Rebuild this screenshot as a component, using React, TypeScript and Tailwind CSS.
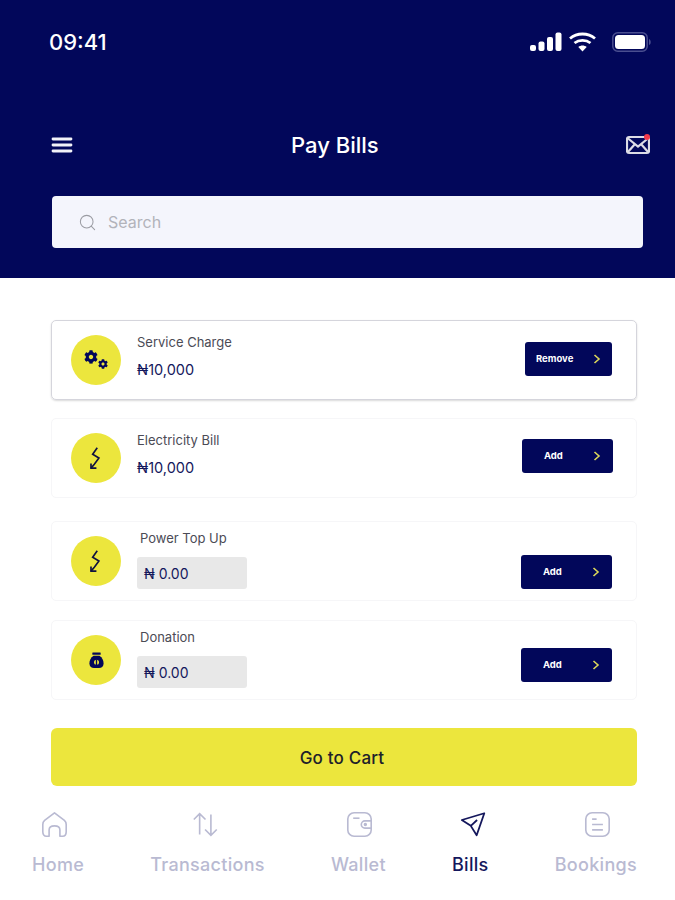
import type { ReactNode } from 'react';
import { Search } from 'lucide-react';
import { FaCog } from 'react-icons/fa';

const font = { fontFamily: 'Inter, "Noto Sans", sans-serif' };

function Gears() {
  return (
    <div className="flex items-start">
      <FaCog size={14} color="#02075a" className="mb-[6px]" />
      <FaCog size={10} color="#02075a" className="mt-[9px]" />
    </div>
  );
}

function Zap() {
  return (
    <svg width="20" height="25" viewBox="0 0 24 30" fill="none" stroke="#10123f" strokeWidth="2">
      <path d="M13.5 2 L8 10 L15.500 14.500 L10 22 L6 26.500" />
      <path d="M6 21 V26.500 H12.500" />
    </svg>
  );
}

function Bag() {
  return (
    <svg width="15" height="17" viewBox="0 0 18 20" fill="#02075a">
      <rect x="4" y="0.500" width="10" height="2.600" rx="0.600" />
      <path d="M5.500 4.200h7C16 6.500 17.500 10 17.500 13.500c0 3.600-2.600 5.500-5.500 5.500H6c-2.900 0-5.500-1.900-5.500-5.500C.5 10 2 6.500 5.500 4.200Z" />
      <circle cx="9" cy="12" r="3" fill="#ece63d" />
      <rect x="8.200" y="8.500" width="1.600" height="7" fill="#02075a" />
    </svg>
  );
}

function AddButton({ label, className }: { label: string; className: string }) {
  return (
    <div className={`flex h-[34px] items-center justify-between rounded-[3px] bg-[#02075a] text-[9.5px] font-bold text-white ${className}`}>
      <span>{label}</span>
      <svg width="8" height="10" viewBox="0 0 8 10" fill="none" stroke="#dcd75a" strokeWidth="1.600">
        <path d="M1.500 1 L6 5 L1.500 9" />
      </svg>
    </div>
  );
}

function Row({ card, icon, children, button }: { card: string; icon: ReactNode; children: ReactNode; button: ReactNode }) {
  return (
    <div className={`ml-[51px] flex h-[80px] w-[586px] items-center rounded-[5px] ${card}`}>
      <div className="ml-[19px] flex h-[50px] w-[50px] shrink-0 items-center justify-center rounded-full bg-[#ece63d]">{icon}</div>
      <div className="min-w-0 flex-1">{children}</div>
      {button}
    </div>
  );
}

function BillText({ label, amount }: { label: string; amount: string }) {
  return (
    <div className="mb-[9px] ml-[16px] flex flex-col">
      <span className="text-[13px] leading-[16px] text-[#4b4b55]">{label}</span>
      <span className="mt-[12px] text-[14.500px] leading-[16px] text-[#14175c]">{amount}</span>
    </div>
  );
}

function AmountInput({ label }: { label: string }) {
  return (
    <div className="mb-[3px] ml-[16px] flex flex-col">
      <span className="ml-[3px] text-[13px] leading-[16px] text-[#4b4b55]">{label}</span>
      <div className="mt-[11px] flex h-[32px] w-[110px] items-center rounded-[3px] bg-[#e8e8e8] pl-[7px] text-[14px] text-[#14175c]">₦ 0.00</div>
    </div>
  );
}

const navStroke = '#b9bad2';

const navItems: { label: string; active?: boolean; iconClass: string; icon: ReactNode }[] = [
  {
    label: 'Home',
    iconClass: 'mr-[7px]',
    icon: (
      <svg width="27" height="27" viewBox="0 0 30 30" fill="none" stroke={navStroke} strokeWidth="1.800" strokeLinejoin="round">
        <path d="M15 2 L26 10.500 C27.500 11.800 28 13 28 15 V23 C28 26 26.500 28 24 28 H21 V21 C21 18 19 16.500 15 16.500 C11 16.500 9 18 9 21 V28 H6 C3.500 28 2 26 2 23 V15 C2 13 2.500 11.800 4 10.500 Z" />
      </svg>
    ),
  },
  {
    label: 'Transactions',
    iconClass: 'mr-[5px]',
    icon: (
      <svg width="27" height="27" viewBox="0 0 30 30" fill="none" stroke={navStroke} strokeWidth="1.800">
        <path d="M8.500 26 V3 M2 9.500 L8.500 3 L15 9.500" />
        <path d="M21 4 V27 M14.500 20.500 L21 27 L27.500 20.500" />
      </svg>
    ),
  },
  {
    label: 'Wallet',
    iconClass: 'ml-[2px]',
    icon: (
      <svg width="27" height="27" viewBox="0 0 30 30" fill="none" stroke={navStroke} strokeWidth="1.800">
        <rect x="2" y="2" width="26" height="26" rx="7" />
        <path d="M8 8 H15" />
        <path d="M28 11 H21 A4 4 0 0 0 21 19 H28" />
        <circle cx="21.500" cy="15" r="1" />
      </svg>
    ),
  },
  {
    label: 'Bills',
    active: true,
    iconClass: 'ml-[6px]',
    icon: (
      <svg width="27" height="27" viewBox="0 0 30 30" fill="none" stroke="#14175c" strokeWidth="2" strokeLinejoin="round">
        <path d="M27 2.500 L2 10 L12 16.500 L18.500 27 Z" />
        <path d="M12 16.500 L19 10" />
      </svg>
    ),
  },
  {
    label: 'Bookings',
    iconClass: 'ml-[3px]',
    icon: (
      <svg width="27" height="27" viewBox="0 0 30 30" fill="none" stroke={navStroke} strokeWidth="1.800">
        <rect x="2" y="2" width="26" height="26" rx="7" />
        <path d="M9 9 H14 M9 15 H21 M9 21 H21" />
      </svg>
    ),
  },
];

export default function App() {
  return (
    <div className="flex h-[900px] w-[675px] flex-col overflow-hidden bg-white" style={font}>
      {/* Header */}
      <div className="h-[278px] shrink-0 bg-[#02075a] pt-[28px]">
        <div className="flex h-[28px] items-center pl-[49px] pr-[23px]">
          <span className="text-[22px] font-medium text-white">09:41</span>
          <svg className="ml-auto" width="32" height="20" viewBox="0 0 32 20" fill="white">
            <rect x="0" y="13" width="6" height="6" rx="2" />
            <rect x="8.500" y="9.500" width="6" height="9.500" rx="2" />
            <rect x="17" y="5" width="6" height="14" rx="2" />
            <rect x="25.500" y="0.500" width="6" height="18.500" rx="2" />
          </svg>
          <svg className="ml-[6px]" width="29" height="20" viewBox="0 0 28 20" fill="none" stroke="white" strokeWidth="2.800">
            <path d="M1.500 6.500 C8.500 0.500 19.500 0.500 26.500 6.500" />
            <path d="M6 11 C10.500 7.500 17.500 7.500 22 11" />
            <path d="M14 19.500 L9.800 15 C12 13 16 13 18.200 15 Z" fill="white" stroke="none" />
          </svg>
          <svg className="ml-[15px]" width="40" height="20" viewBox="0 0 40 20" fill="none">
            <rect x="0.800" y="0.800" width="34.400" height="18.400" rx="5" stroke="#4a4e8f" strokeWidth="1.500" />
            <rect x="3" y="3" width="30" height="14" rx="3.500" fill="white" />
            <path d="M37 7 C39 7.500 39.500 12.500 37 13 Z" fill="#4a4e8f" />
          </svg>
        </div>

        <div className="mt-[69px] flex h-[40px] items-center pl-[51px] pr-[25px]">
          <svg width="22" height="18" viewBox="0 0 22 18" stroke="#f2f2f8" strokeWidth="2.800" strokeLinecap="round">
            <path d="M2 3 H20 M2 9 H20 M2 15 H20" />
          </svg>
          <span className="ml-[218px] text-[22px] font-medium text-white">Pay Bills</span>
          <div className="relative ml-auto">
            <svg width="24" height="20" viewBox="0 0 24 20" fill="none" stroke="#dcdce6" strokeWidth="2.200">
              <rect x="1" y="2" width="22" height="16" rx="2" />
              <path d="M1.500 3 L12 11.500 L22.500 3 M1.500 17.500 L9 9 M22.500 17.500 L15 9" />
            </svg>
            <span className="absolute right-0 top-[-1px] h-[6px] w-[6px] rounded-full bg-[#f0384a]" />
          </div>
        </div>

        <div className="ml-[52px] mt-[31px] flex h-[52px] w-[591px] items-center rounded-[4px] bg-[#f4f5fc] pl-[26px]">
          <Search size={19} strokeWidth={1.300} className="text-[#9b9ca3]" />
          <span className="ml-[11px] text-[16px] text-[#b2b3ba]">Search</span>
        </div>
      </div>

      {/* Bills */}
      <div className="mt-[42px] flex flex-col">
        <Row
          card="border border-[#d5d5dc] shadow-[0_1px_2px_rgba(0,0,0,0.15)]"
          icon={<Gears />}
          button={<AddButton label="Remove" className="mb-[2px] mr-[24px] w-[87px] pl-[11px] pr-[11px]" />}
        >
          <BillText label="Service Charge" amount="₦10,000" />
        </Row>
        <div className="mt-[18px]">
          <Row
            card="border border-[#f6f6f8]"
            icon={<Zap />}
            button={<AddButton label="Add" className="mb-[4px] mr-[23px] w-[91px] pl-[22px] pr-[12px]" />}
          >
            <BillText label="Electricity Bill" amount="₦10,000" />
          </Row>
        </div>
        <div className="mt-[23px]">
          <Row
            card="border border-[#f6f6f8]"
            icon={<Zap />}
            button={<AddButton label="Add" className="mr-[24px] mt-[22px] w-[91px] pl-[22px] pr-[12px]" />}
          >
            <AmountInput label="Power Top Up" />
          </Row>
        </div>
        <div className="mt-[19px]">
          <Row
            card="border border-[#f6f6f8]"
            icon={<Bag />}
            button={<AddButton label="Add" className="mr-[24px] mt-[10px] w-[91px] pl-[22px] pr-[12px]" />}
          >
            <AmountInput label="Donation" />
          </Row>
        </div>
      </div>

      <div className="ml-[51px] mt-[28px] flex h-[58px] w-[586px] items-center justify-center rounded-[6px] bg-[#ece63d] pr-[4px] pt-[3px] text-[17px] font-medium tracking-[0.2px] text-[#20202a]">
        Go to Cart
      </div>

      {/* Bottom nav */}
      <div className="mt-[25px] flex justify-between pl-[32px] pr-[38px]">
        {navItems.map((item) => (
          <div key={item.label} className="flex flex-col items-center">
            <div className={item.iconClass}>{item.icon}</div>
            <span className={`mt-[16px] text-[18px] font-medium leading-[22px] tracking-[0.3px] ${item.active ? 'text-[#14175c]' : 'text-[#b9bad2]'}`}>
              {item.label}
            </span>
          </div>
        ))}
      </div>
    </div>
  );
}
